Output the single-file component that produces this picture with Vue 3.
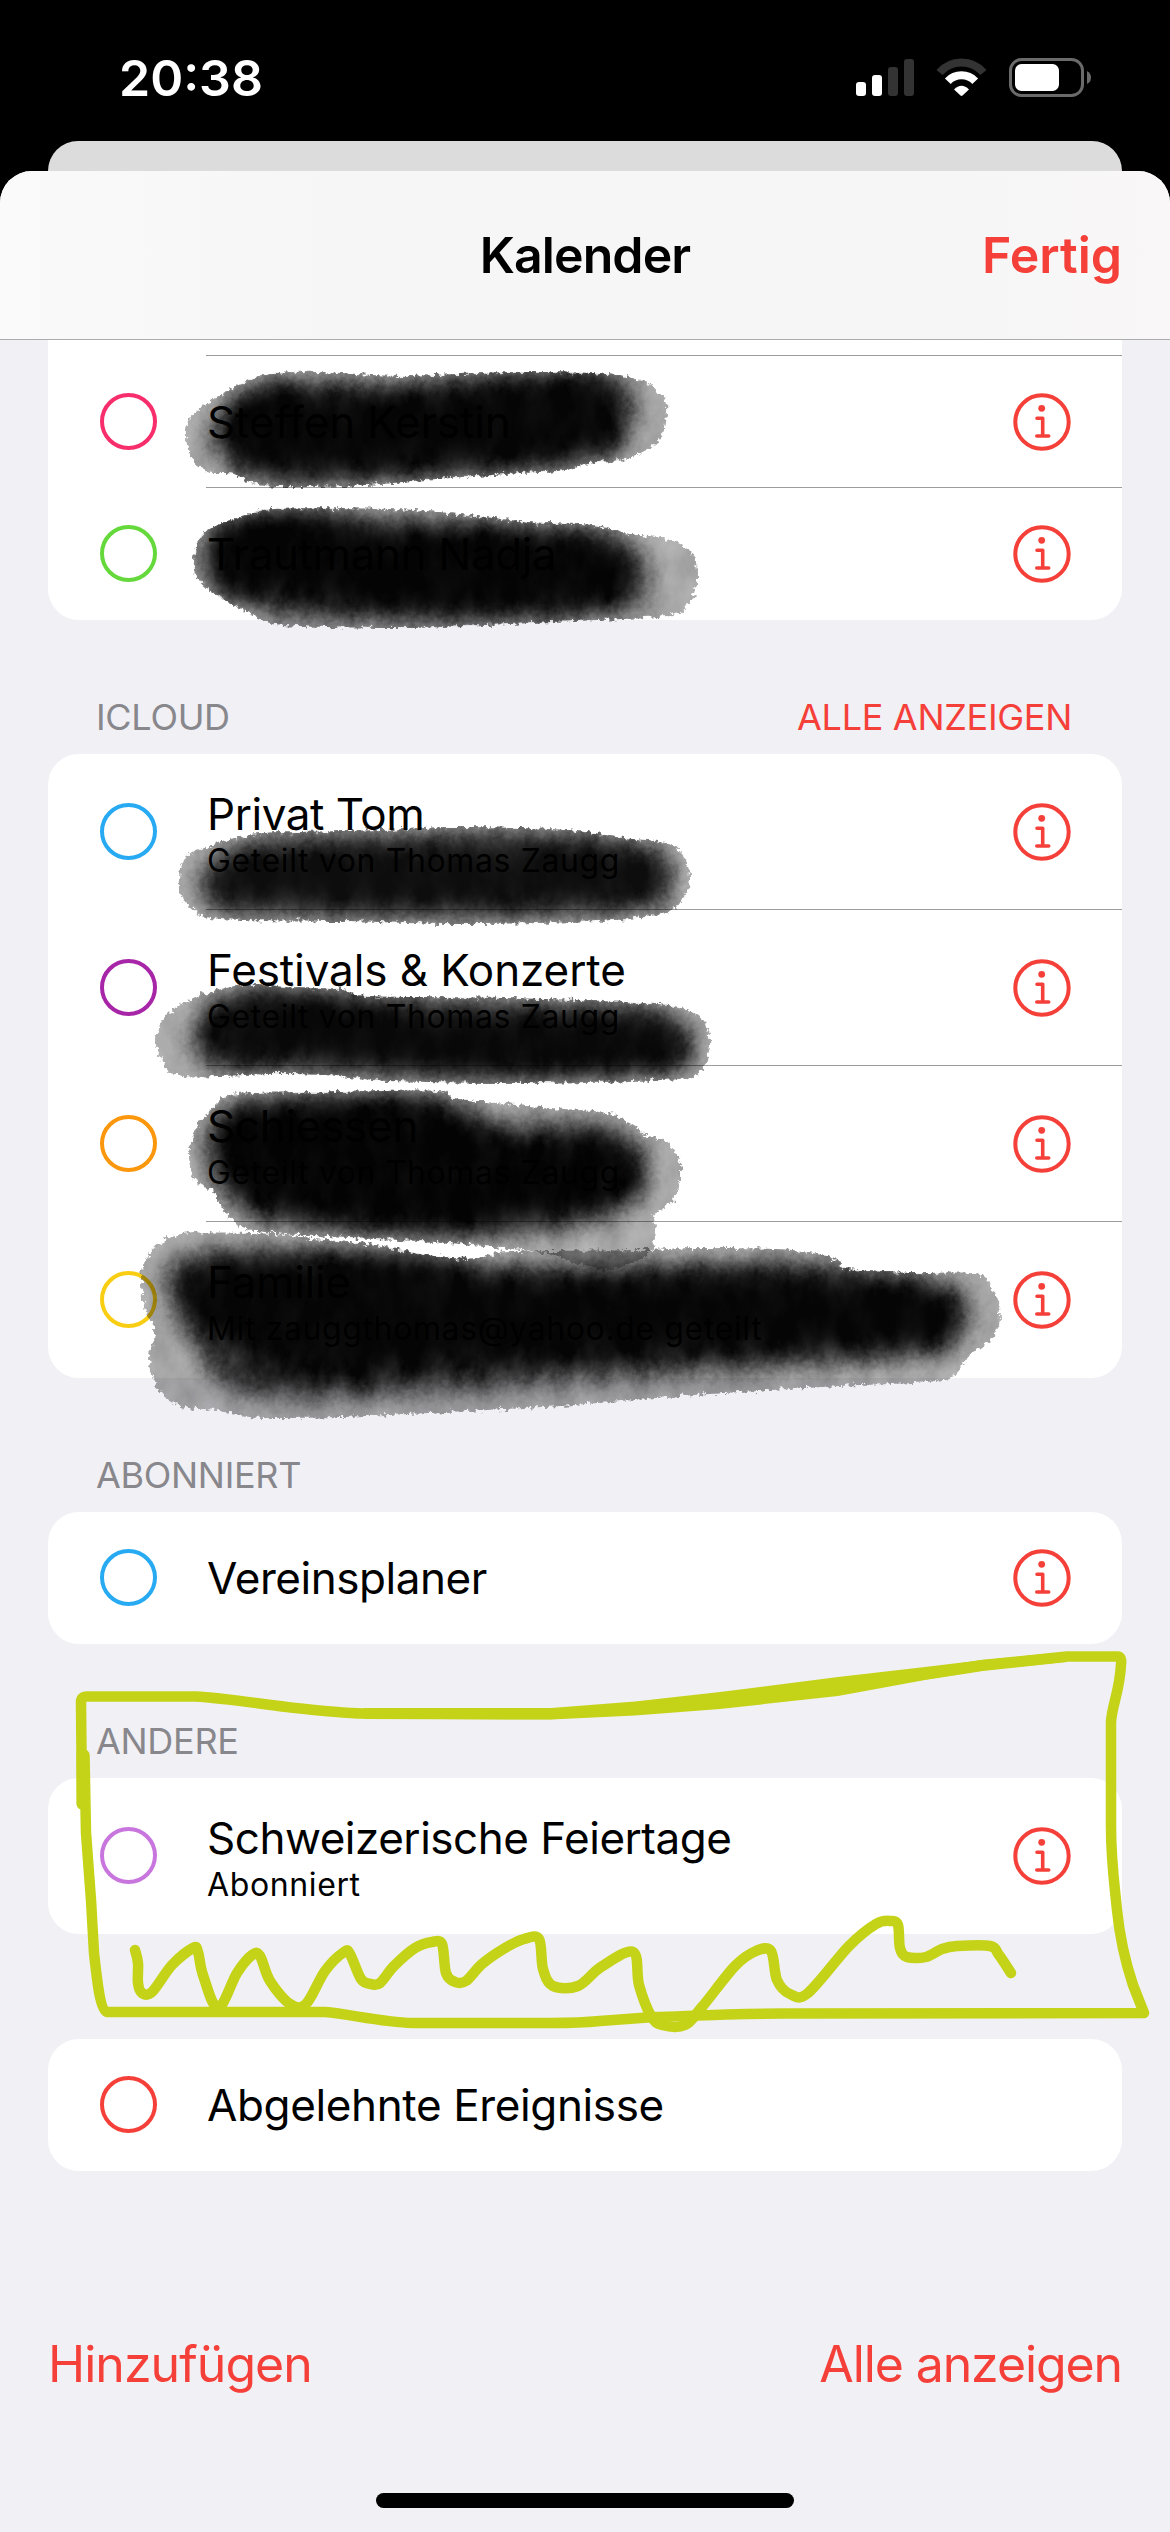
<script setup>
const sections = [
  {
    id: 'top',
    clipped: true,
    rows: [
      { title: 'Steffen Kerstin', color: '#f72d6c', tracking: -0.15, info: true },
      { title: 'Trautmann Nadja', color: '#65d83c', tracking: -0.4, info: true },
    ],
  },
  {
    id: 'icloud',
    label: 'iCloud',
    action: 'Alle anzeigen',
    rows: [
      { title: 'Privat Tom', sub: 'Geteilt von Thomas Zaugg', color: '#27aaf2', tracking: -0.45, info: true },
      { title: 'Festivals & Konzerte', sub: 'Geteilt von Thomas Zaugg', color: '#a726a8', tracking: -0.1, info: true },
      { title: 'Schiessen', sub: 'Geteilt von Thomas Zaugg', color: '#fa970d', tracking: -0.3, info: true },
      { title: 'Familie', sub: 'Mit zauggthomas@yahoo.de geteilt', color: '#f8cd12', tracking: -0.3, info: true },
    ],
  },
  {
    id: 'subscribed',
    label: 'Abonniert',
    rows: [{ title: 'Vereinsplaner', color: '#27aaf2', tracking: -0.45, info: true }],
  },
  {
    id: 'other',
    label: 'Andere',
    rows: [{ title: 'Schweizerische Feiertage', sub: 'Abonniert', color: '#c876de', tracking: -0.48, info: true }],
  },
  {
    id: 'declined',
    spaced: true,
    rows: [{ title: 'Abgelehnte Ereignisse', color: '#f5403a', tracking: -0.37 }],
  },
]

// Smooth curve through a list of "x,y" points
function curve(text, closed = false) {
  const p = text.trim().split(/\s+/).map((s) => s.split(',').map(Number))
  const n = p.length
  const at = (i) => (closed ? p[(i + n) % n] : p[Math.max(0, Math.min(n - 1, i))])
  let d = `M${p[0]}`
  const count = closed ? n : n - 1
  for (let i = 0; i < count; i++) {
    const [a, b, c, e] = [at(i - 1), at(i), at(i + 1), at(i + 2)]
    const k = 1 / 6
    d += `C${b[0] + (c[0] - a[0]) * k},${b[1] + (c[1] - a[1]) * k} ${c[0] - (e[0] - b[0]) * k},${c[1] - (e[1] - b[1]) * k} ${c}`
  }
  return closed ? d + 'Z' : d
}

const ink = [
  {
    edge: '186,437 191,417 216,398 257,377 294,372 340,373 399,376 459,374 528,372 606,374 643,381 663,397 666,412 659,440 629,458 588,463 565,470 505,474 436,479 367,485 298,487 257,485 234,474 211,472 193,460',
    core: '232,430 245,400 285,388 330,397 420,394 520,384 595,382 614,405 604,445 500,460 400,467 290,468 240,456',
    mid: '210,440 225,405 270,385 340,385 520,377 610,376 632,400 628,440 580,462 400,478 270,482 230,465',
    opacity: 0.975,
  },
  {
    edge: '194,560 200,537 216,526 248,515 275,509 390,509 459,514 528,522 592,525 624,533 666,539 691,552 697,577 689,603 666,616 574,621 482,625 404,628 285,625 248,612 216,595 197,577',
    core: '212,550 225,528 265,518 330,520 375,535 450,530 540,535 610,548 630,572 610,598 500,610 380,607 280,592 225,590',
    mid: '204,555 215,530 260,515 330,514 400,520 540,528 620,538 645,570 630,610 480,618 380,618 280,615 220,590',
    opacity: 0.98,
  },
  {
    edge: '179,880 184,860 207,847 257,834 298,832 381,830 459,827 565,830 624,838 666,843 684,857 690,880 680,902 661,914 597,921 459,924 344,921 220,919 193,909 181,897',
    core: '222,872 260,853 400,850 560,848 640,858 660,878 640,898 500,904 300,903 225,895',
    mid: '198,878 225,850 290,838 460,832 600,836 655,850 674,880 650,906 500,915 300,914 215,908',
    opacity: 0.945,
  },
  {
    edge: '156,1040 165,1017 193,998 230,987 257,984 294,988 340,989 367,996 505,998 643,1003 689,1010 707,1027 710,1045 704,1067 693,1076 661,1080 519,1083 390,1081 340,1076 275,1074 184,1076 163,1062',
    core: '215,1020 245,998 330,1000 400,1012 640,1018 680,1040 665,1062 500,1069 380,1064 300,1058 225,1054',
    mid: '192,1025 230,998 330,995 500,1004 650,1010 688,1038 675,1070 500,1077 340,1070 210,1066',
    opacity: 0.965,
  },
  {
    edge: '189,1157 197,1127 216,1104 239,1094 340,1092 436,1091 459,1099 551,1108 606,1113 634,1126 646,1135 670,1144 681,1170 673,1200 655,1214 656,1232 650,1251 638,1260 606,1270 574,1262 537,1252 436,1242 331,1237 257,1231 234,1222 220,1203 213,1190 197,1182',
    core: '222,1145 238,1112 290,1106 420,1106 475,1128 520,1147 600,1140 632,1165 620,1195 520,1216 430,1226 300,1212 245,1195',
    mid: '206,1150 225,1108 290,1099 430,1098 500,1122 600,1125 648,1160 635,1200 560,1228 430,1234 280,1222 225,1195',
    opacity: 0.985,
  },
  {
    edge: '141,1277 147,1257 165,1240 193,1233 275,1234 312,1239 367,1244 441,1257 478,1258 510,1252 643,1250 696,1248 793,1250 836,1260 848,1269 910,1273 969,1273 988,1281 999,1307 996,1333 969,1357 961,1369 937,1381 840,1386 708,1394 622,1401 560,1406 505,1409 367,1416 285,1418 248,1417 216,1410 184,1407 161,1393 149,1360 155,1333 144,1307',
    core: '185,1290 200,1268 260,1262 400,1262 500,1280 640,1278 780,1278 930,1292 950,1318 930,1340 800,1346 640,1354 460,1362 320,1372 250,1350 200,1322',
    mid: '165,1290 178,1262 250,1250 400,1253 500,1266 640,1266 790,1264 940,1282 968,1310 945,1350 800,1366 620,1378 460,1390 290,1398 220,1380 190,1336',
    opacity: 0.975,
  },
].map((s) => ({ edge: curve(s.edge, true), core: curve(s.core, true), mid: curve(s.mid, true), opacity: s.opacity }))

const frame =
  'M82,1804L81,1702Q81,1696.500 87,1696.500L195,1696.500C225,1698 260,1704 287,1707S340,1713 364,1713.500L551,1714L635,1708L838,1688L983,1665L1067,1656.500L1118,1656.500Q1122,1657 1121,1664C1120,1690 1112,1705 1111,1722L1111,1827C1111,1860 1114,1880 1117,1910S1128,1970 1133,1985L1144,2013L784,2013.500C720,2014 690,2016 654,2017L600,2021Q580,2023 551,2023L413,2023C380,2022 350,2014 325,2012L107,2012C100,2010 97,1980 94,1953L91,1900L86,1833L84.500,1755'
const wedge =
  'M364,1708L551,1708L635,1701.500L720,1692L838,1677L925,1667L983,1660L1067,1652L1067,1662L983,1671L925,1680L838,1696L720,1709L635,1715.500L551,1719.500L364,1719Z'
const squiggle = curve(
  '135,1950 138,1963 138,1983 142,1993 152,1992 172,1965 193,1948 198,1952 203,1975 218,2008 237,1973 252,1955 260,1956 270,1981 290,2004 306,2004 325,1971 344,1952 350,1954 361,1979 371,1984 380,1983 394,1966 415,1948 432,1942 442,1944 446,1973 455,1982 466,1981 482,1964 505,1948 524,1939 539,1939 543,1969 553,1986 578,1986 601,1967 633,1952 639,1985 651,2016 662,2025 685,2025 702,2007 735,1966 756,1951 771,1951 777,1980 790,1994 808,1993 849,1946 876,1924 891,1921 898,1925 900,1948 907,1957 926,1957 942,1949 957,1946 990,1946 999,1955 1011,1973',
)
</script>

<template>
  <div class="screen">
    <header class="status">
      <span class="time">20:38</span>
      <svg class="status-icons" width="240" height="44" viewBox="0 0 240 44">
        <g fill="#fff">
          <rect x="1" y="25" width="10" height="14" rx="3" />
          <rect x="17" y="18" width="10" height="21" rx="3" />
        </g>
        <g fill="#333">
          <rect x="33" y="10" width="10" height="29" rx="3" />
          <rect x="49" y="2" width="10" height="37" rx="3" />
        </g>
        <g fill="none" stroke-width="8">
          <path d="M84.500,15.500A29,29 0 0 1 128.500,15.500" stroke="#333" />
          <path d="M92.800,24.200A19,19 0 0 1 120.200,24.200" stroke="#fff" />
        </g>
        <path d="M99,32.500Q106.500,25 114,32.500L107.500,38.600Q106.500,39.500 105.500,38.600Z" fill="#fff" />
        <rect x="155.500" y="2.500" width="72" height="36" rx="11" fill="none" stroke="#6a6a6a" stroke-width="3" />
        <rect x="160" y="7" width="44" height="27" rx="6.500" fill="#fff" />
        <path d="M232,14Q236,16 236,20.500T232,27Z" fill="#6a6a6a" />
      </svg>
    </header>

    <div class="back-sheet"></div>

    <main class="sheet">
      <div class="navbar">
        <h1>Kalender</h1>
        <button class="done">Fertig</button>
      </div>

      <section v-for="s in sections" :key="s.id" :class="{ spaced: s.spaced }">
        <div v-if="s.label" class="label">
          <span>{{ s.label }}</span>
          <a v-if="s.action" class="action">{{ s.action }}</a>
        </div>
        <ul class="card" :class="{ clipped: s.clipped }">
          <li v-if="s.clipped" class="remnant"></li>
          <li v-for="r in s.rows" :key="r.title" class="row" :class="{ tall: r.sub }">
            <span class="ring" :style="{ borderColor: r.color }"></span>
            <div class="body">
              <div class="text">
                <span class="title" :style="{ letterSpacing: r.tracking + 'px' }">{{ r.title }}</span>
                <span v-if="r.sub" class="sub">{{ r.sub }}</span>
              </div>
              <svg v-if="r.info" class="info" width="58" height="58" viewBox="0 0 58 58">
                <circle cx="29" cy="29" r="26.700" fill="none" stroke="#f5403a" stroke-width="4" />
                <circle cx="28.700" cy="15.300" r="3.400" fill="#f5403a" />
                <path d="M24,25.200H29.700V43M23.800,43H35.700" fill="none" stroke="#f5403a" stroke-width="3.600" stroke-linecap="round" stroke-linejoin="round" />
              </svg>
            </div>
          </li>
        </ul>
      </section>

      <footer class="toolbar">
        <button class="add">Hinzufügen</button>
        <button class="all">Alle anzeigen</button>
      </footer>
      <div class="home"></div>
    </main>

    <svg class="markup" width="1170" height="2532" viewBox="0 0 1170 2532">
      <defs>
        <filter id="rough" filterUnits="userSpaceOnUse" x="100" y="340" width="940" height="1120" color-interpolation-filters="sRGB">
          <feTurbulence type="fractalNoise" baseFrequency="0.2" numOctaves="3" seed="4" result="n" />
          <feDisplacementMap in="SourceGraphic" in2="n" scale="9" xChannelSelector="R" yChannelSelector="G" result="d" />
          <feTurbulence type="fractalNoise" baseFrequency="0.04 0.025" numOctaves="5" seed="9" result="g" />
          <feColorMatrix in="g" type="matrix" values="0 0 0 0 0  0 0 0 0 0  0 0 0 0 0  1.500 0 0 0 -0.250" result="grain" />
          <feComposite in="d" in2="grain" operator="arithmetic" k1="0.300" k2="0.850" />
        </filter>
        <filter id="soft" x="-20%" y="-60%" width="140%" height="220%"><feGaussianBlur stdDeviation="12" /></filter>
        <filter id="softer" x="-20%" y="-60%" width="140%" height="220%"><feGaussianBlur stdDeviation="13" /></filter>
        <clipPath v-for="(s, i) in ink" :id="'edge' + i" :key="i"><path :d="s.edge" /></clipPath>
      </defs>
      <g v-for="(s, i) in ink" :key="i" :opacity="s.opacity">
        <g filter="url(#rough)">
          <path :d="s.edge" fill="#000" fill-opacity="0.340" />
          <g :clip-path="`url(#edge${i})`">
            <path :d="s.mid" fill="#000" fill-opacity="0.800" filter="url(#softer)" />
            <path :d="s.core" fill="#000" fill-opacity="0.700" filter="url(#soft)" />
          </g>
        </g>
        <path :d="s.core" fill="#000" fill-opacity="0.850" filter="url(#soft)" :clip-path="`url(#edge${i})`" />
      </g>
      <g fill="none" stroke="#c4d318" stroke-width="10.500" stroke-linecap="round" stroke-linejoin="round">
        <path :d="frame" />
        <path d="M82,1755V1804" stroke-width="11" />
        <path :d="squiggle" />
      </g>
      <path :d="wedge" fill="#c4d318" />
    </svg>
  </div>
</template>

<style>
body {
  margin: 0;
  background: #000;
}
</style>

<style scoped>
.screen {
  position: relative;
  display: flex;
  flex-direction: column;
  width: 1170px;
  height: 2532px;
  overflow: hidden;
  background: #000;
  font-family: Inter, "Liberation Sans", sans-serif;
  color: #000;
}
.status {
  box-sizing: border-box;
  display: flex;
  justify-content: space-between;
  height: 141px;
  padding: 48px 75px 0 119px;
}
.time {
  color: #fff;
  font-size: 50px;
  font-weight: 600;
  line-height: 60px;
}
.status-icons {
  margin-top: 9px;
}
.back-sheet {
  flex: none;
  height: 30px;
  margin: 0 48px;
  border-radius: 30px 30px 0 0;
  background: #dcdcdd;
}
.sheet {
  flex: 1;
  display: flex;
  flex-direction: column;
  border-radius: 32px 32px 0 0;
  overflow: hidden;
  background: #f1f0f5;
}
.navbar {
  box-sizing: border-box;
  display: grid;
  grid-template-columns: 1fr auto 1fr;
  align-items: center;
  height: 169px;
  padding: 0 48px;
  border-bottom: 1px solid #acacaf;
  background: linear-gradient(90deg, #fafafa, #f6f6f6 30%, #f6f6f6 75%, #f9f7f7);
}
h1 {
  grid-column: 2;
  margin: 0;
  font-size: 50px;
  font-weight: 600;
  letter-spacing: -0.9px;
  line-height: 60px;
}
button {
  padding: 0;
  border: 0;
  background: none;
  color: #f5403a;
  font: inherit;
  font-size: 50px;
  line-height: 60px;
}
.done {
  justify-self: end;
  font-weight: 600;
}
.label {
  display: flex;
  justify-content: space-between;
  align-items: center;
  height: 74px;
  padding: 60px 98px 0 96px;
  color: #88878c;
  font-size: 36px;
  letter-spacing: -0.3px;
  text-transform: uppercase;
}
.action {
  color: #f5403a;
}
.spaced {
  padding-top: 105px;
}
.card {
  margin: 0 48px;
  padding: 0;
  list-style: none;
  border-radius: 31px;
  background: #fff;
}
.clipped {
  border-radius: 0 0 31px 31px;
}
.remnant {
  height: 15px;
  margin-left: 158px;
  border-bottom: 1px solid #9c9c9e;
}
.row {
  display: flex;
  align-items: center;
  height: 132px;
  padding-left: 52px;
}
.row.tall {
  height: 156px;
}
.ring {
  box-sizing: border-box;
  flex: none;
  width: 57px;
  height: 57px;
  margin-bottom: 1px;
  border: 4px solid;
  border-radius: 50%;
}
.body {
  box-sizing: border-box;
  flex: 1;
  display: flex;
  align-items: center;
  justify-content: space-between;
  height: 100%;
  margin-left: 49px;
  padding-right: 51px;
  border-bottom: 1px solid #9c9c9e;
}
.row:last-child .body {
  border-bottom-color: transparent;
}
.text {
  display: flex;
  flex-direction: column;
  gap: 1px;
  padding-left: 1px;
}
.tall .text {
  padding-top: 7px;
}
.title {
  font-size: 44px;
  line-height: 50px;
  white-space: nowrap;
}
.sub {
  font-size: 32px;
  line-height: 41px;
  letter-spacing: 0.62px;
  white-space: nowrap;
}
.toolbar {
  display: flex;
  justify-content: space-between;
  align-items: center;
  margin-top: 163px;
  padding: 0 48px;
}
.add {
  letter-spacing: -0.95px;
}
.all {
  letter-spacing: -1.1px;
}
.home {
  width: 418px;
  height: 15px;
  margin: 99px auto 0;
  border-radius: 8px;
  background: #000;
}
.markup {
  position: absolute;
  inset: 0;
}
</style>
